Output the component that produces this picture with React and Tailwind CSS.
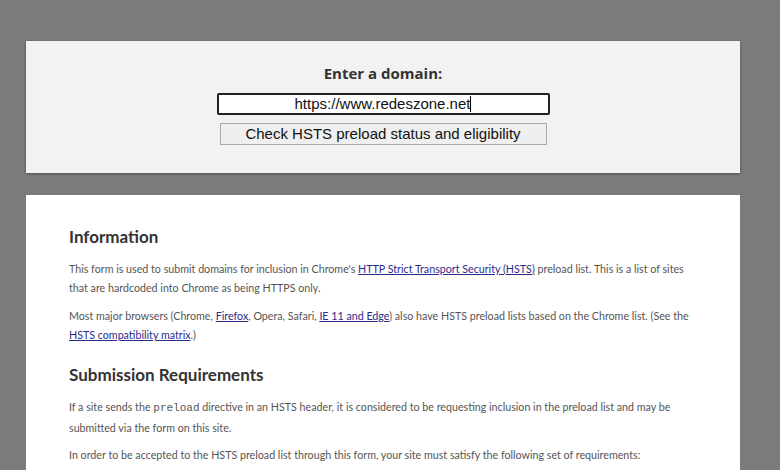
export default function App() {
  const link = 'text-[#2b2b8c] underline'
  return (
    <div className="h-[470px] bg-[#7b7b7b] pt-[41px] overflow-hidden">
      {/* formulario de dominio */}
      <div className="ml-[26px] w-[714px] h-[132px] bg-[#f2f2f2] shadow-[0_1px_3px_rgba(0,0,0,0.35)] flex flex-col items-center pt-[22px]">
        <h2 className="font-['Open_Sans',sans-serif] font-bold text-[15px] leading-[20px] text-[#333]">Enter a domain:</h2>
        <div className="mt-[10px] w-[333px] h-[22px] bg-white border-2 border-[#222] rounded-[2px] flex items-center justify-center font-['Liberation_Sans',Arial,sans-serif] text-[15px] text-[#111]">
          https://www.redeszone.net<span className="inline-block w-px h-[16px] bg-black" />
        </div>
        <button className="mt-[8px] w-[327px] h-[22px] bg-[#efefef] border border-[#a9a9a9] flex items-center justify-center font-['Liberation_Sans',Arial,sans-serif] text-[15px] text-[#111]">
          Check HSTS preload status and eligibility
        </button>
      </div>

      {/* contenido informativo */}
      <div className="mt-[22px] ml-[26px] w-[714px] h-[300px] bg-white pl-[43px] pr-[40px] pt-[30px] font-['Lato',sans-serif] text-[#555] text-[10.7px] leading-[19px] whitespace-nowrap">
        <h3 className="font-bold text-[17px] leading-[24px] text-[#333]">Information</h3>
        <p className="mt-[10px]">
          This form is used to submit domains for inclusion in Chrome's{' '}
          <a className={link}>HTTP Strict Transport Security (HSTS)</a> preload list. This is a list of sites
          <br />that are hardcoded into Chrome as being HTTPS only.
        </p>
        <p className="mt-[9px]">
          Most major browsers (Chrome, <a className={link}>Firefox</a>, Opera, Safari, <a className={link}>IE 11 and Edge</a>) also have HSTS preload lists based on the Chrome list. (See the
          <br /><a className={link}>HSTS compatibility matrix</a>.)
        </p>
        <h3 className="mt-[19px] font-bold text-[17px] leading-[24px] text-[#333]">Submission Requirements</h3>
        <p className="mt-[10px]">
          If a site sends the <code className="font-['Liberation_Mono',monospace] text-[11px]">preload</code> directive in an HSTS header, it is considered to be requesting inclusion in the preload list and may be
          <br />submitted via the form on this site.
        </p>
        <p className="mt-[8px]">
          In order to be accepted to the HSTS preload list through this form, your site must satisfy the following set of requirements:
        </p>
      </div>
    </div>
  )
}
